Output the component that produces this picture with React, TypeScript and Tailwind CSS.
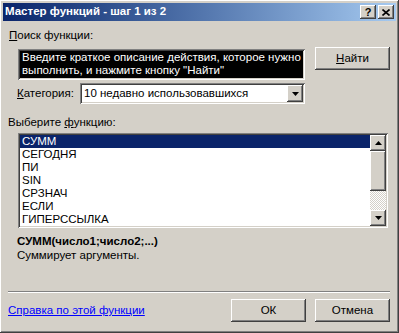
const raised =
  "shadow-[inset_-1px_-1px_#404040,inset_1px_1px_#ffffff,inset_-2px_-2px_#808080,inset_2px_2px_#d4d0c8]";
const sunken =
  "shadow-[inset_1px_1px_#808080,inset_-1px_-1px_#ffffff,inset_2px_2px_#404040,inset_-2px_-2px_#d4d0c8]";

const funcs = ["СУММ", "СЕГОДНЯ", "ПИ", "SIN", "СРЗНАЧ", "ЕСЛИ", "ГИПЕРССЫЛКА"];

const Arrow = ({ up }: { up?: boolean }) => (
  <svg width="7" height="4" viewBox="0 0 7 4">
    {up ? <polygon points="3.5,0 7,4 0,4" fill="#000" /> : <polygon points="0,0 7,0 3.5,4" fill="#000" />}
  </svg>
);

const Button = ({ children, className }: { children: React.ReactNode; className?: string }) => (
  <button className={`bg-[#d4d0c8] text-black text-[11.5px] flex items-center justify-center ${raised} ${className ?? ""}`}>
    {children}
  </button>
);

export default function App() {
  return (
    <div
      className={`w-[399px] h-[333px] bg-[#d4d0c8] p-[3px] flex flex-col text-[11.5px] text-black ${raised}`}
      style={{ fontFamily: "Tahoma, 'Liberation Sans', sans-serif" }}
    >
      {/* title bar */}
      <div className="h-[18px] flex items-center justify-between bg-gradient-to-r from-[#0a246a] to-[#a6caf0] pl-[2px] pr-[2px]">
        <span className="text-white font-bold text-[11.5px] leading-none">Мастер функций - шаг 1 из 2</span>
        <div className="flex gap-[2px]">
          <div className={`w-[16px] h-[14px] bg-[#d4d0c8] flex items-center justify-center font-bold text-[11px] leading-none ${raised}`}>?</div>
          <div className={`w-[16px] h-[14px] bg-[#d4d0c8] flex items-center justify-center ${raised}`}>
            <svg width="8" height="7" viewBox="0 0 8 7">
              <path d="M0.5 0.5 L7.5 6.5 M7.5 0.5 L0.5 6.5" stroke="#000" strokeWidth="1.6" />
            </svg>
          </div>
        </div>
      </div>

      {/* search */}
      <div className="mt-[8px] ml-[6px] leading-[13px]">
        <span className="underline">П</span>оиск функции:
      </div>
      <div className="mt-[7px] flex items-start">
        <div className={`ml-[15px] w-[287px] h-[31px] bg-black text-white px-[4px] pt-[2px] leading-[13px] ${sunken}`}>
          Введите краткое описание действия, которое нужно выполнить, и нажмите кнопку "Найти"
        </div>
        <Button className="ml-[10px] w-[75px] h-[23px] -mt-[2px]">
          <span className="underline">Н</span>айти
        </Button>
      </div>

      {/* category */}
      <div className="mt-[3px] flex items-center">
        <span className="ml-[14px] w-[63px]">
          <span className="underline">К</span>атегория:
        </span>
        <div className={`w-[225px] h-[21px] bg-white flex items-center justify-between pl-[4px] pr-[2px] ${sunken}`}>
          <span>10 недавно использовавшихся</span>
          <div className={`w-[16px] h-[17px] bg-[#d4d0c8] flex items-center justify-center ${raised}`}>
            <Arrow />
          </div>
        </div>
      </div>

      <div className="mt-[12px] ml-[5px] leading-[13px]">
        Выберите <span className="underline">ф</span>ункцию:
      </div>

      {/* list */}
      <div className={`mt-[4px] ml-[15px] w-[370px] h-[95px] bg-white p-[2px] flex ${sunken}`}>
        <div className="flex-1 flex flex-col">
          {funcs.map((f, i) => (
            <div
              key={f}
              className={`h-[13px] leading-[13px] pl-[2px] ${i === 0 ? "bg-[#0a246a] text-white" : ""}`}
            >
              {f}
            </div>
          ))}
        </div>
        <div className="w-[16px] flex flex-col">
          <div className={`h-[16px] bg-[#d4d0c8] flex items-center justify-center ${raised}`}>
            <Arrow up />
          </div>
          <div className={`h-[40px] bg-[#d4d0c8] ${raised}`} />
          <div className="flex-1 bg-[repeating-conic-gradient(#d4d0c8_0_25%,#ffffff_0_50%)] bg-[length:2px_2px]" />
          <div className={`h-[16px] bg-[#d4d0c8] flex items-center justify-center ${raised}`}>
            <Arrow />
          </div>
        </div>
      </div>

      <div className="mt-[7px] ml-[14px] font-bold leading-[13px]">СУММ(число1;число2;...)</div>
      <div className="mt-[1px] ml-[14px] leading-[13px]">Суммирует аргументы.</div>

      <div className="flex-1" />

      <div className="ml-[5px] mr-[6px] h-[2px] border-t border-t-[#808080] border-b border-b-white" />

      <div className="mt-[6px] mb-[8px] flex items-center">
        <a href="#" className="ml-[5px] text-[#0000ff] underline">Справка по этой функции</a>
        <div className="flex-1" />
        <Button className="w-[75px] h-[23px]">ОК</Button>
        <Button className="ml-[9px] mr-[6px] w-[75px] h-[23px]">Отмена</Button>
      </div>
    </div>
  );
}
